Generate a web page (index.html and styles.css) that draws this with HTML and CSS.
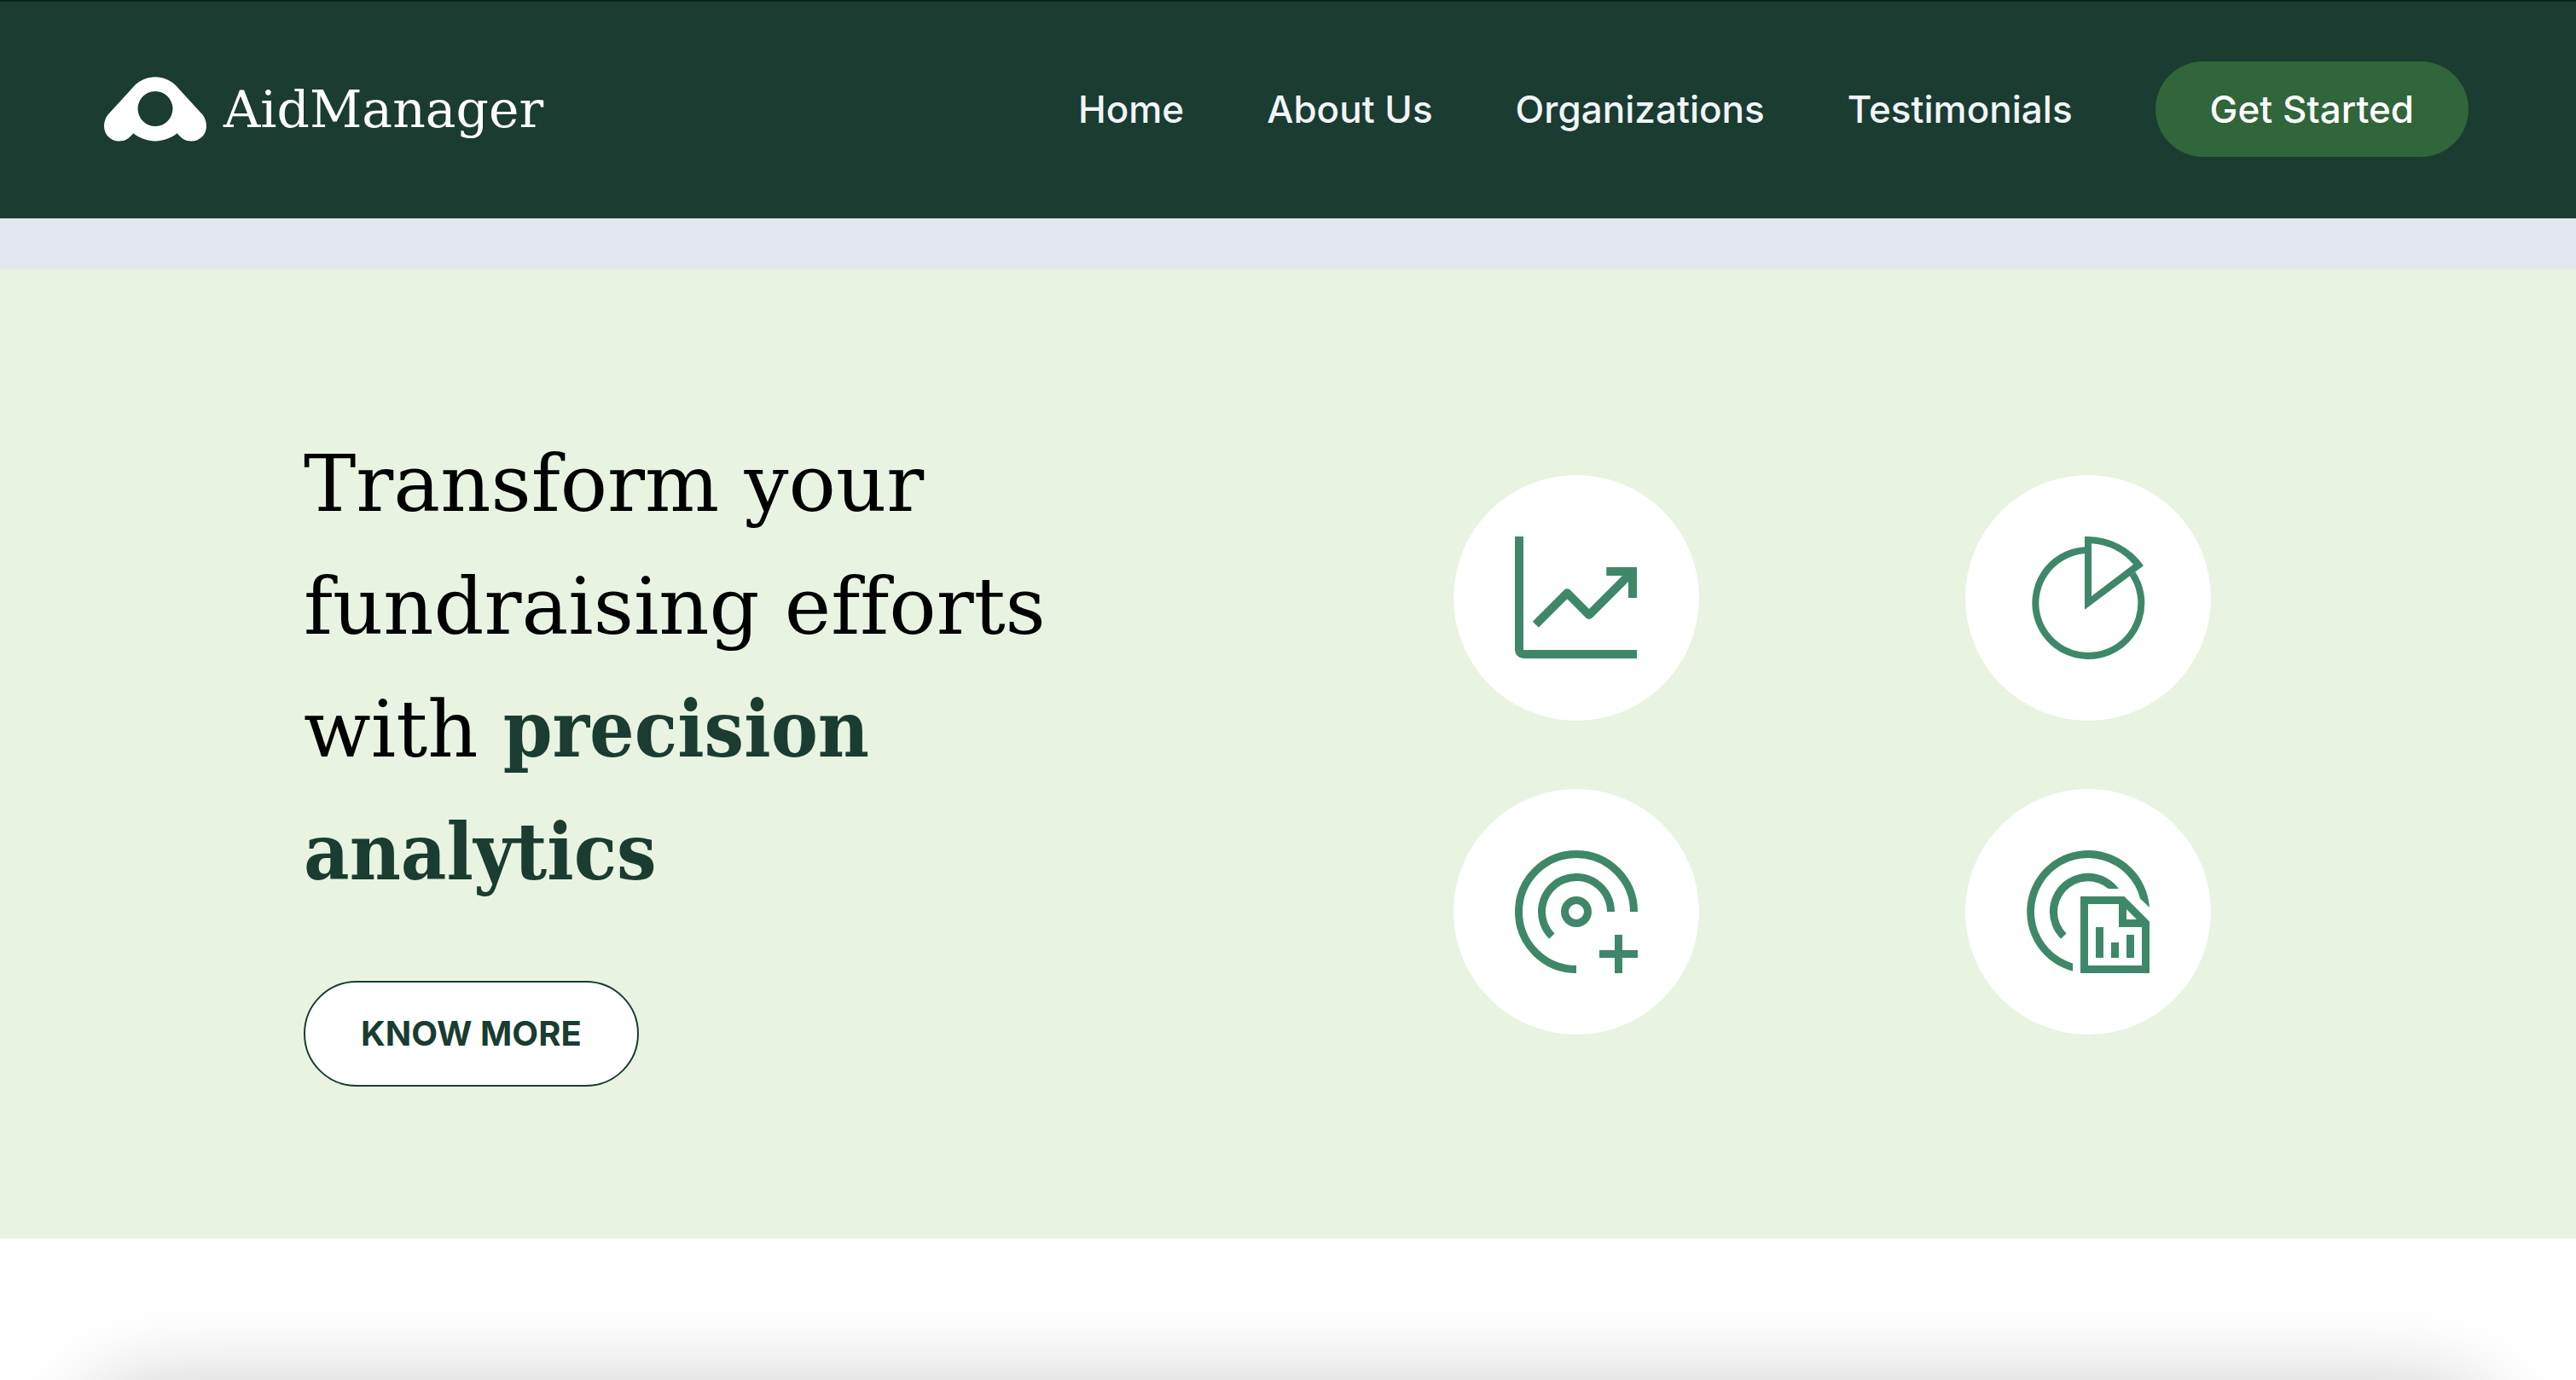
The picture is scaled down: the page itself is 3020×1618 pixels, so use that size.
FILE: index.html
```html
<!DOCTYPE html>
<html lang="en">
<head>
  <meta charset="utf-8">
  <meta name="viewport" content="width=device-width, initial-scale=1">
  <title>AidManager</title>
  <link rel="stylesheet" href="styles.css">
</head>
<body>
  <header class="site-header">
    <a class="brand" href="#home">
      <svg class="brand-mark" viewBox="0 0 120 76" aria-hidden="true">
        <path fill-rule="evenodd" d="M35 11 C49 -3.500 71 -3.500 85 11 Q86.500 12.500 88 14.500 L115.500 44.500 C118.500 48.500 120 53 120 58 C120 68 112 75.500 102.500 75.500 C95 75.500 91 72.500 85.700 66.300 C70 78.500 50 78.500 34.300 66.300 C29 72.500 25 75.500 17.500 75.500 C8 75.500 0 68 0 58 C0 53 1.500 48.500 4.500 44.500 L32 14.500 Q33.500 12.500 35 11 Z M60 17 A20.500 20.500 0 1 0 60 58 A20.500 20.500 0 1 0 60 17 Z"/>
      </svg>
      <span class="brand-name">AidManager</span>
    </a>
    <nav class="site-nav" aria-label="Main">
      <a class="nav-link" href="#home">Home</a>
      <a class="nav-link" href="#about">About Us</a>
      <a class="nav-link" href="#organizations">Organizations</a>
      <a class="nav-link" href="#testimonials">Testimonials</a>
      <button class="button button-primary" type="button">Get Started</button>
    </nav>
  </header>

  <main class="page">
    <section class="hero" id="home">
      <div class="hero-copy">
        <h1 class="hero-title">Transform your fundraising efforts with <strong class="accent">precision</strong> <strong class="accent">analytics</strong></h1>
        <button class="button button-outline" type="button">KNOW MORE</button>
      </div>
      <ul class="features">
        <li class="feature">
          <svg class="feature-icon" viewBox="0 0 144 144" role="img" aria-label="Growth chart">
            <path d="M0 0 H10 V133 H143 V143 H10 A10 10 0 0 1 0 133 Z"/>
            <path class="line" stroke-linejoin="round" d="M24.300 103.300 L61.300 66.300 L87 92 L138 41"/>
            <path class="line" d="M107.300 41 H138 V72"/>
          </svg>
        </li>
        <li class="feature">
          <svg class="feature-icon" viewBox="0 0 144 144" role="img" aria-label="Pie chart">
            <path class="line line-thin" d="M72 16 A62 62 0 1 0 124 43.700"/>
            <path fill-rule="evenodd" d="M68 0 H72 A80 80 0 0 1 137 34.300 L68 85.700 Z M76 8.300 A71 71 0 0 1 125 32.700 L76 70 Z"/>
          </svg>
        </li>
        <li class="feature">
          <svg class="feature-icon" viewBox="0 0 144 144" role="img" aria-label="Add target">
            <path class="line line-medium" d="M139.500 72 A67.500 67.500 0 1 0 72 139.500 M112.500 72 A40.500 40.500 0 1 0 43.400 100.600 M99 121.500 H144 M121.500 99 V144"/>
            <circle class="line line-medium" cx="72" cy="72" r="13.500"/>
          </svg>
        </li>
        <li class="feature">
          <svg class="feature-icon" viewBox="0 0 144 144" role="img" aria-label="Target report">
            <path d="M54 141.700 A72 72 0 1 1 144 67 L133 56.500 A63 63 0 1 0 54 132.400 Z"/>
            <path d="M108 45 A45 45 0 1 0 40.200 103.800 L46.500 97.500 A36 36 0 0 1 95.700 45 Z"/>
            <path fill-rule="evenodd" d="M63 54 H114.500 L144 83.500 V144 H63 Z M72 63 V135 H135 V90 H108 V63 Z M117 69 V81 H129 Z"/>
            <path d="M81 90 H90 V126 H81 Z M99 108 H108 V126 H99 Z M117 99 H126 V126 H117 Z"/>
          </svg>
        </li>
      </ul>
    </section>
    <section class="about" id="about">
      <div class="about-card"></div>
    </section>
  </main>
</body>
</html>
```

FILE: styles.css
```css
:root {
  --forest: #1a3c31;
  --leaf: #31653a;
  --mint: #e8f3e1;
  --icon: #3e8869;
  --sans: "Inter", "Liberation Sans", sans-serif;
  --serif: "DejaVu Serif", "Liberation Serif", serif;
}

* {
  box-sizing: border-box;
}

body {
  margin: 0;
  background: #fff;
  font-family: var(--sans);
  overflow-x: hidden;
}

.site-header {
  display: flex;
  align-items: center;
  justify-content: space-between;
  height: 256px;
  padding: 0 126px 0 122px;
  background: var(--forest);
  box-shadow: inset 0 2px 0 #0b231b;
}

.brand {
  display: flex;
  align-items: center;
  gap: 20px;
  color: #fff;
  text-decoration: none;
}

.brand-mark {
  width: 120px;
  height: 76px;
  fill: currentColor;
}

.brand-name {
  font-family: var(--serif);
  font-size: 60px;
  line-height: 76px;
}

.site-nav {
  display: flex;
  align-items: center;
  gap: 97px;
}

.nav-link {
  color: #f1f5f9;
  font-size: 44px;
  font-weight: 500;
  line-height: 56px;
  text-decoration: none;
}

.button {
  border: 0;
  border-radius: 64px;
  font-family: inherit;
  line-height: 56px;
  cursor: pointer;
}

.button-primary {
  padding: 28px 64px;
  background: var(--leaf);
  color: #fff;
  font-size: 44px;
  font-weight: 500;
}

.button-outline {
  padding: 32px 65px;
  border: 2px solid var(--forest);
  background: #fff;
  color: var(--forest);
  font-size: 40px;
  font-weight: 700;
}

.page {
  border-top: 60px solid #e2e7f0;
}

.hero {
  display: grid;
  grid-template-columns: 1fr 1fr;
  align-items: center;
  padding: 180px 272px 178px 348px;
  background: var(--mint);
}

.hero-copy {
  display: flex;
  flex-direction: column;
  align-items: flex-start;
  gap: 78px;
  padding-left: 8px;
}

.hero-title {
  max-width: 960px;
  margin: 0;
  color: #000;
  font-family: var(--serif);
  font-size: 92px;
  font-weight: 400;
  font-variant-ligatures: none;
  line-height: 144px;
}

.accent {
  color: var(--forest);
  font-family: "DejaVu Serif Condensed", var(--serif);
  font-weight: 700;
  line-height: 92px;
}

.features {
  display: grid;
  grid-template-columns: 1fr 1fr;
  justify-items: center;
  row-gap: 80px;
  margin: 0;
  padding: 0;
  list-style: none;
}

.feature {
  display: grid;
  place-items: center;
  width: 288px;
  height: 288px;
  border-radius: 50%;
  background: #fff;
}

.feature-icon {
  width: 144px;
  height: 144px;
  fill: var(--icon);
}

.line {
  fill: none;
  stroke: var(--icon);
  stroke-width: 10px;
}

.line-thin {
  stroke-width: 8px;
}

.line-medium {
  stroke-width: 9px;
}

.about {
  height: 166px;
  padding: 172px 84px 0;
  overflow: hidden;
}

.about-card {
  height: 800px;
  border-radius: 96px;
  background: #fff;
  box-shadow: 0 0 100px rgba(0, 0, 0, 0.22);
}
```
